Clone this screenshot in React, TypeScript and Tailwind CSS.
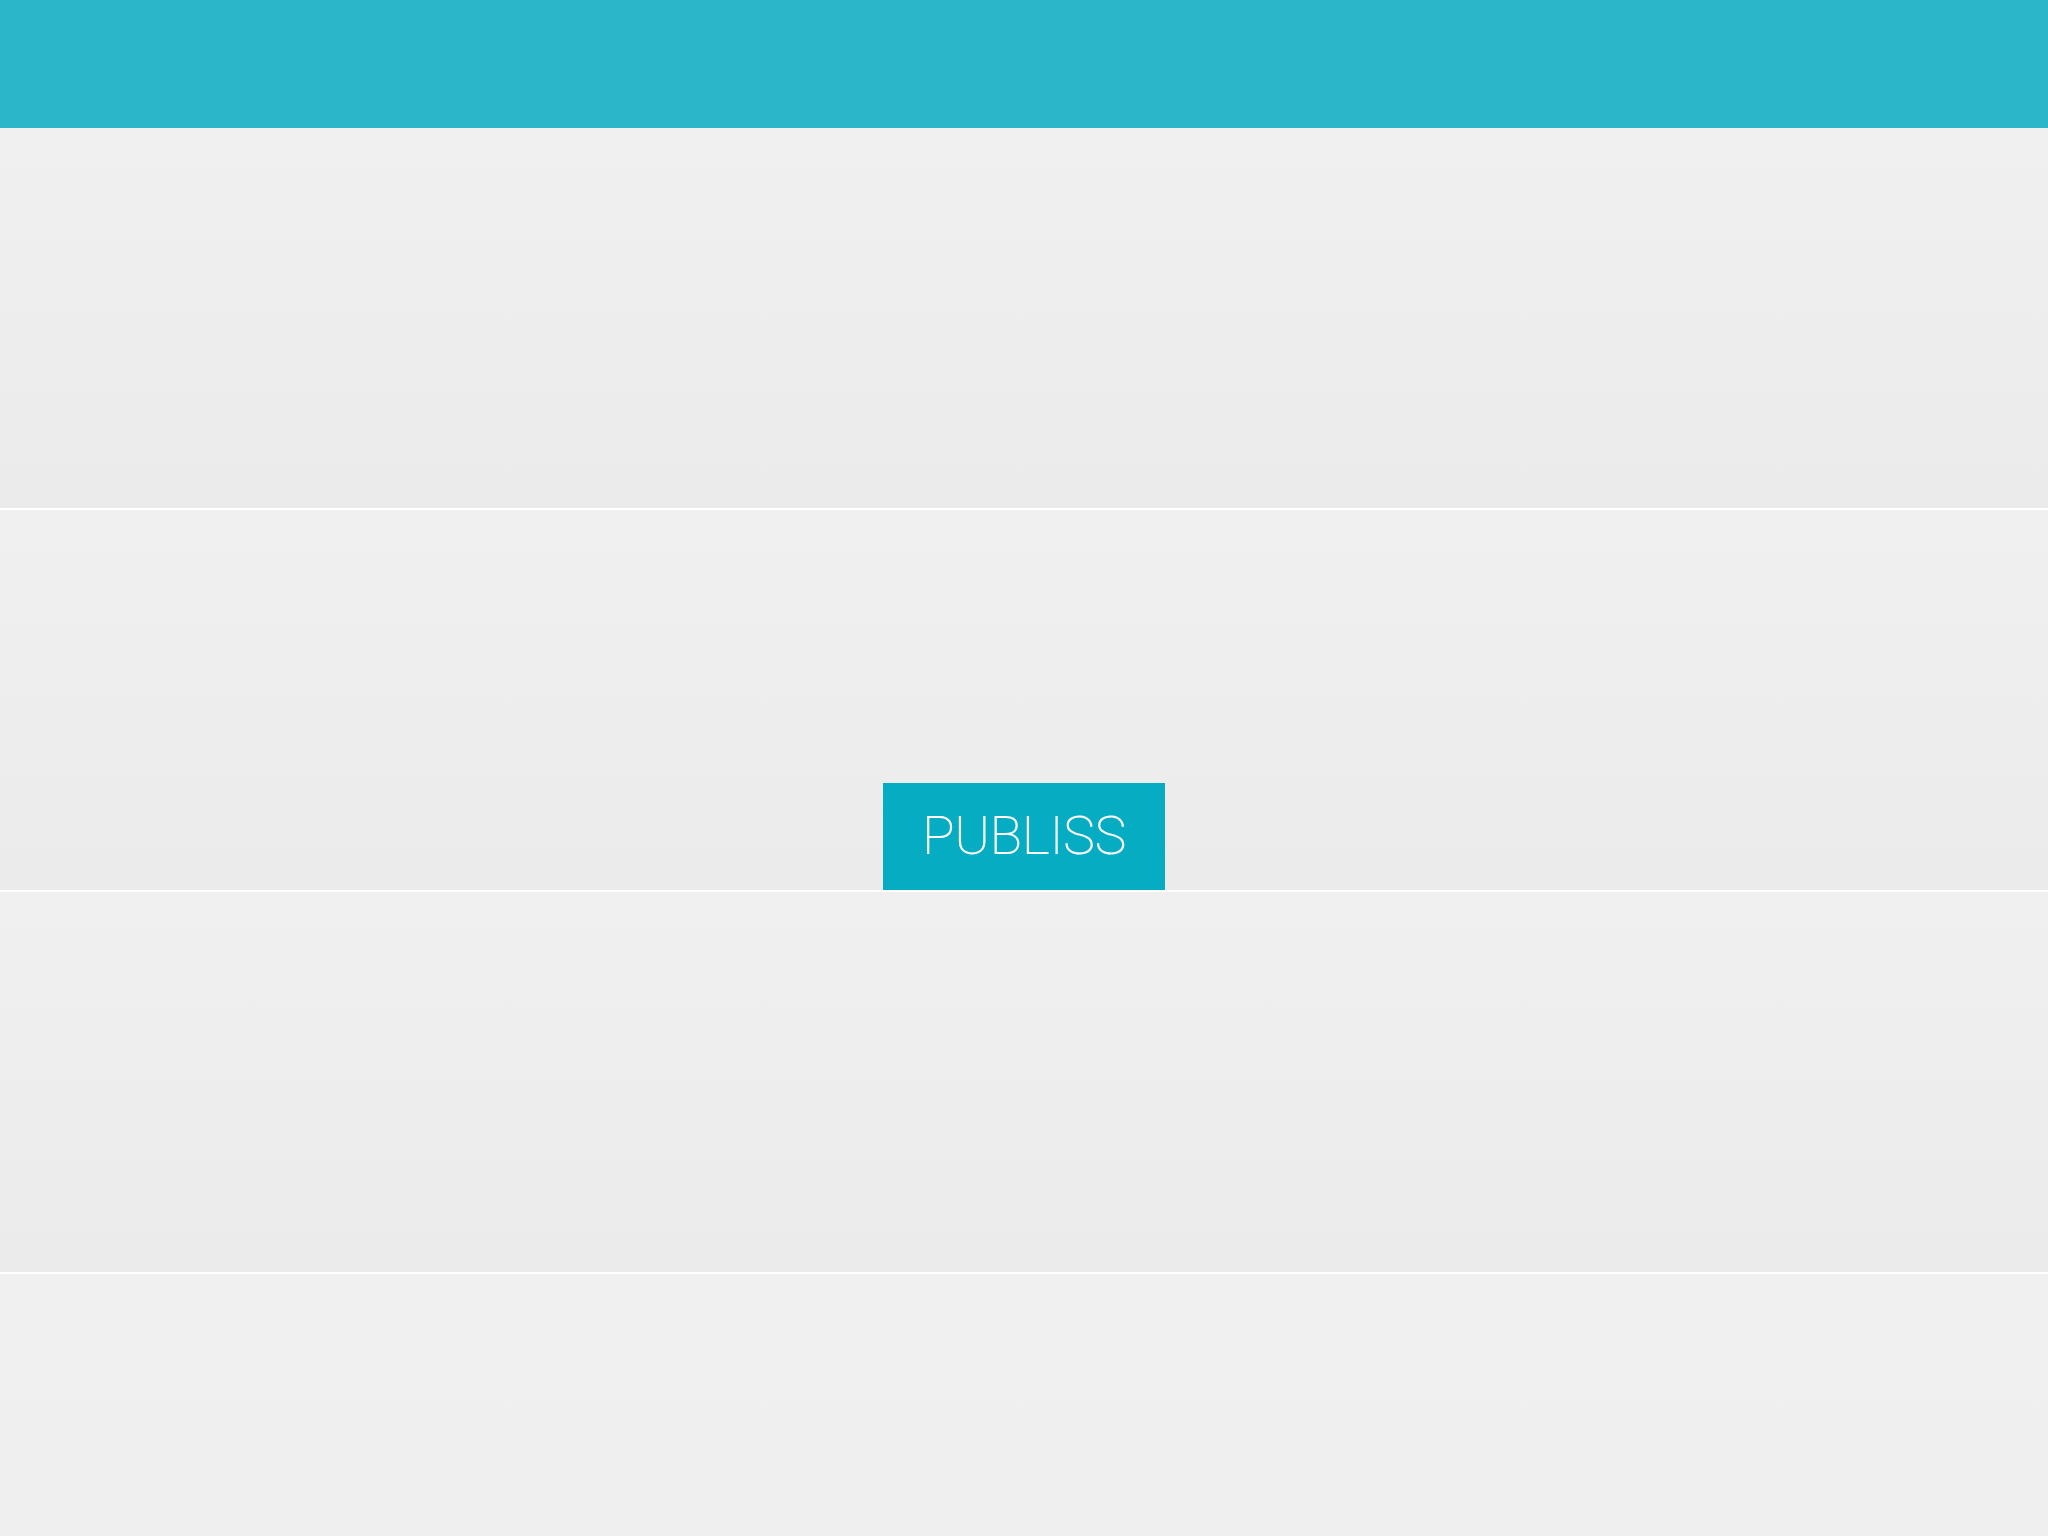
const Row = ({ children }: { children?: React.ReactNode }) => (
  <div className="h-[382px] shrink-0 border-b-2 border-white bg-gradient-to-b from-[#f0f0f0] to-[#ebebeb]">
    {children}
  </div>
);

export default function App() {
  return (
    <div className="flex flex-col min-h-screen bg-[#efefef] font-['Roboto',sans-serif]">
      <header className="h-[128px] shrink-0 bg-[#2bb7c9]" />
      <Row />
      <Row>
        <div className="flex h-full items-end pl-[883px]">
          <button className="flex h-[107px] w-[282px] items-center justify-center pb-[2px] bg-[#06adc2] text-[54px] font-extralight tracking-[-0.5px] text-white leading-none">
            PUBLISS
          </button>
        </div>
      </Row>
      <Row />
      <div className="flex-1 bg-gradient-to-b from-[#f0f0f0] to-[#efefef]" />
    </div>
  );
}
